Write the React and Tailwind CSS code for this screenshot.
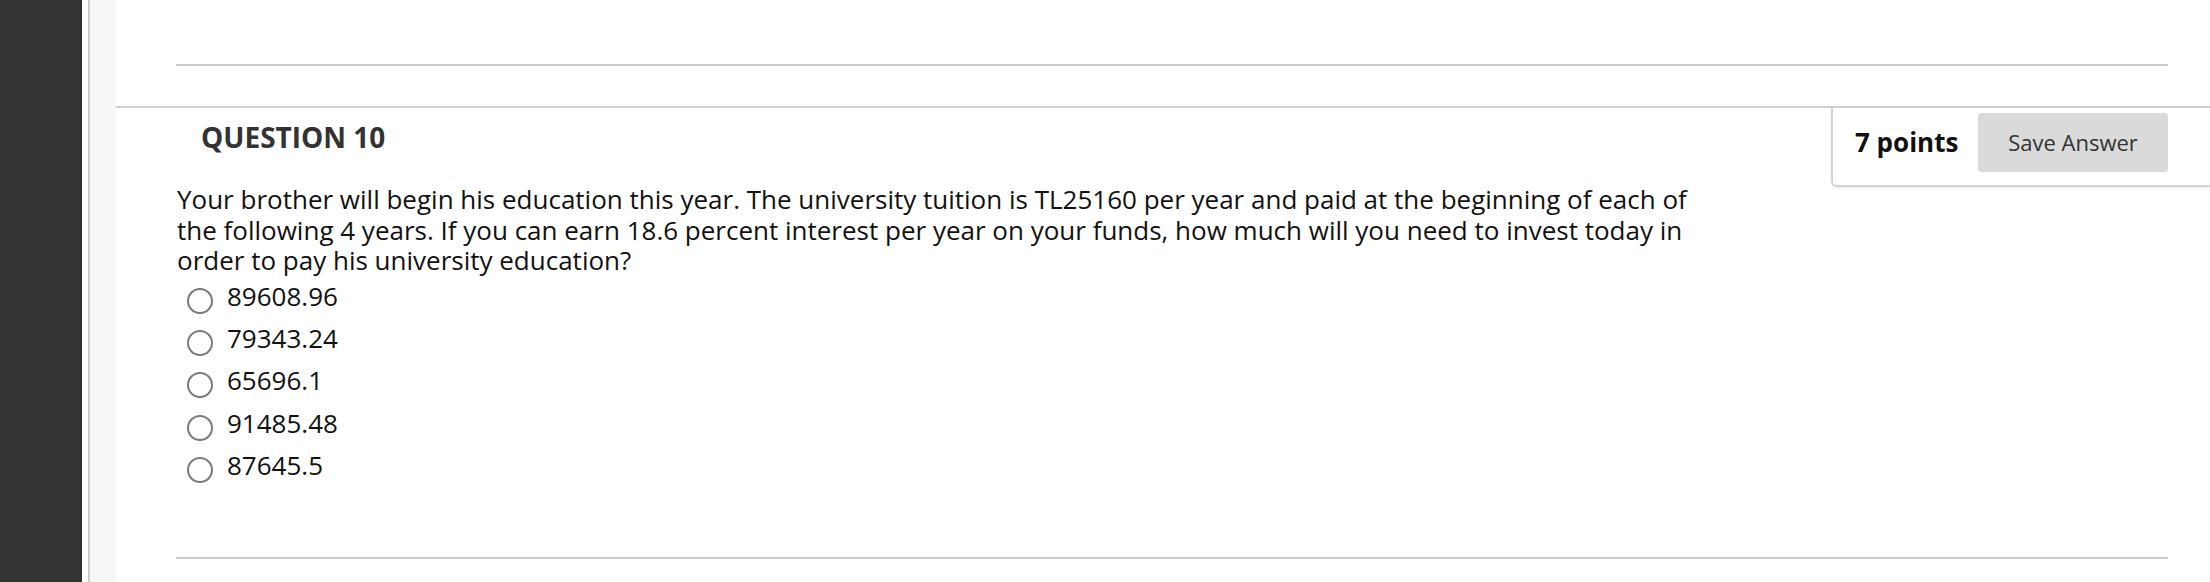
import React from "react";

const options = ["89608.96", "79343.24", "65696.1", "91485.48", "87645.5"];

export default function App() {
  return (
    <div
      className="flex h-[582px] w-full overflow-hidden bg-white"
      style={{ fontFamily: '"Open Sans", "Noto Sans", sans-serif' }}
    >
      <div className="w-[82px] shrink-0 bg-[#333333]" />
      <div className="w-[6px] shrink-0 bg-white" />
      <div className="w-[2px] shrink-0 bg-[#cccccc]" />
      <div className="w-[26px] shrink-0 bg-[#f7f7f7]" />
      <div className="flex min-w-0 flex-1 flex-col">
        <div className="pt-[64px] pl-[60px] pr-[42px]">
          <div className="h-[2px] bg-[#cdcdcd]" />
        </div>
        <div className="h-[40px]" />
        <div className="flex h-[451px] border-t-2 border-[#d0d0d0]">
          <div className="flex-1 pl-[61px] pt-[10px]">
            <h2 className="ml-[24px] text-[28px] font-bold leading-[38px] text-[#333333]">
              QUESTION 10
            </h2>
            <p className="mt-[28px] w-[1530px] text-[26px] leading-[30.5px] text-[#111111]">
              Your brother will begin his education this year. The university tuition is TL25160 per year and paid at the beginning of each of the following 4 years. If you can earn 18.6 percent interest per year on your funds, how much will you need to invest today in order to pay his university education?
            </p>
            <div className="-mt-[1px] flex flex-col">
              {options.map((o) => (
                <label key={o} className="flex h-[42.3px] items-center">
                  <span className="ml-[10px] mt-[10px] h-[26px] w-[26px] shrink-0 rounded-full border-2 border-[#7a7a7a] bg-white" />
                  <span className="ml-[14px] text-[26px] leading-[30px] text-[#111111]">{o}</span>
                </label>
              ))}
            </div>
          </div>
          <div className="flex h-[79px] w-[379px] shrink-0 items-center self-start rounded-bl-[6px] border-b-2 border-l-2 border-[#d3d3d3] pl-[22px] pr-[42px] pt-[0px] pb-[8px] shadow-[0_1px_2px_rgba(0,0,0,0.08)]">
            <span className="text-[26px] font-bold text-[#111111]">7 points</span>
            <button className="ml-auto h-[59px] w-[190px] rounded-[4px] bg-[#dadada] text-[22px] text-[#333333]">
              Save Answer
            </button>
          </div>
        </div>
        <div className="pl-[60px] pr-[42px]">
          <div className="h-[2px] bg-[#cdcdcd]" />
        </div>
      </div>
    </div>
  );
}
